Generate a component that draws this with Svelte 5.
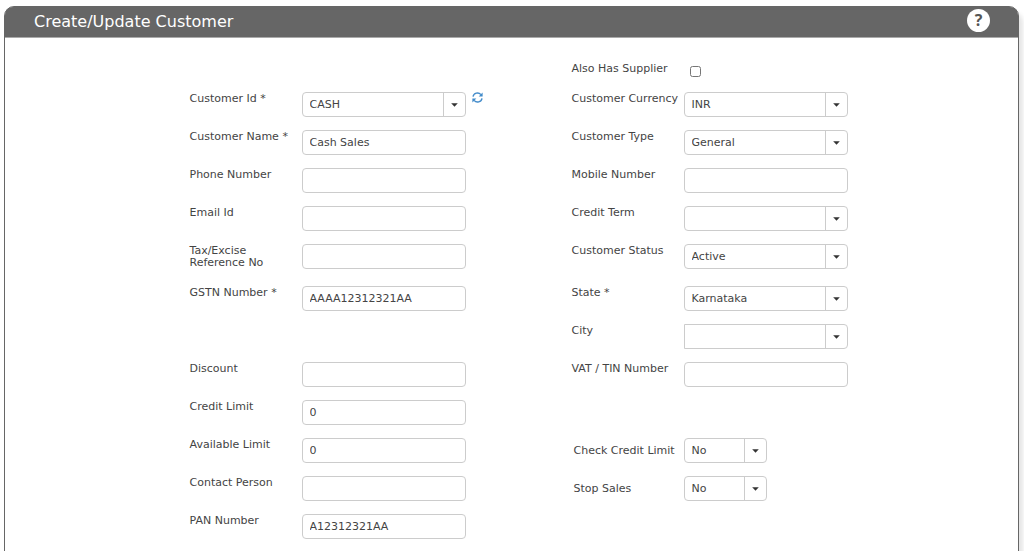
<script lang="ts">
  type Field = {
    id: string;
    label: string;
    kind: 'text' | 'select' | 'checkbox';
    value?: string;
    small?: boolean;
    refresh?: boolean;
    square?: boolean;
  };

  type Row = { left?: Field; right?: Field };

  const rows: Row[] = [
    { right: { id: 'has-supplier', label: 'Also Has Supplier', kind: 'checkbox' } },
    {
      left: { id: 'customer-id', label: 'Customer Id *', kind: 'select', value: 'CASH', refresh: true },
      right: { id: 'currency', label: 'Customer Currency', kind: 'select', value: 'INR' },
    },
    {
      left: { id: 'customer-name', label: 'Customer Name *', kind: 'text', value: 'Cash Sales' },
      right: { id: 'customer-type', label: 'Customer Type', kind: 'select', value: 'General' },
    },
    {
      left: { id: 'phone', label: 'Phone Number', kind: 'text' },
      right: { id: 'mobile', label: 'Mobile Number', kind: 'text' },
    },
    {
      left: { id: 'email', label: 'Email Id', kind: 'text' },
      right: { id: 'credit-term', label: 'Credit Term', kind: 'select' },
    },
    {
      left: { id: 'tax-ref', label: 'Tax/Excise Reference No', kind: 'text' },
      right: { id: 'status', label: 'Customer Status', kind: 'select', value: 'Active' },
    },
    {
      left: { id: 'gstn', label: 'GSTN Number *', kind: 'text', value: 'AAAA12312321AA' },
      right: { id: 'state', label: 'State *', kind: 'select', value: 'Karnataka' },
    },
    { right: { id: 'city', label: 'City', kind: 'select', square: true } },
    {
      left: { id: 'discount', label: 'Discount', kind: 'text' },
      right: { id: 'vat', label: 'VAT / TIN Number', kind: 'text' },
    },
    { left: { id: 'credit-limit', label: 'Credit Limit', kind: 'text', value: '0' } },
    {
      left: { id: 'available-limit', label: 'Available Limit', kind: 'text', value: '0' },
      right: { id: 'check-limit', label: 'Check Credit Limit', kind: 'select', value: 'No', small: true },
    },
    {
      left: { id: 'contact', label: 'Contact Person', kind: 'text' },
      right: { id: 'stop-sales', label: 'Stop Sales', kind: 'select', value: 'No', small: true },
    },
    { left: { id: 'pan', label: 'PAN Number', kind: 'text', value: 'A12312321AA' } },
  ];
</script>

{#snippet cell(field: Field | undefined)}
  {#if field}
    <div class="field" class:small={field.small} class:check={field.kind === 'checkbox'}>
      <label for={field.id}>{field.label}</label>
      <div class="control">
        {#if field.kind === 'checkbox'}
          <input id={field.id} type="checkbox" />
        {:else if field.kind === 'select'}
          <div class="combo" class:square={field.square}>
            <select id={field.id}>
              <option>{field.value ?? ''}</option>
            </select>
            <span class="arrow">
              <svg width="7" height="4" viewBox="0 0 7 4" aria-hidden="true">
                <path d="M0.2 0.2h6.6L3.5 3.8z" fill="#333" />
              </svg>
            </span>
          </div>
        {:else}
          <input id={field.id} type="text" value={field.value ?? ''} />
        {/if}
        {#if field.refresh}
          <button class="refresh" type="button" aria-label="Refresh">
            <svg width="11" height="11" viewBox="0 0 11 11" aria-hidden="true">
              <g fill="none" stroke="#428bca" stroke-width="1.4">
                <path d="M1 4.7A4.5 4.5 0 0 1 8.9 2.6" />
                <path d="M10 6.3A4.5 4.5 0 0 1 2.1 8.4" />
              </g>
              <path d="M10.6 0.6v3.9H6.7z" fill="#428bca" />
              <path d="M0.4 10.4V6.5h3.9z" fill="#428bca" />
            </svg>
          </button>
        {/if}
      </div>
    </div>
  {:else}
    <div class="field"></div>
  {/if}
{/snippet}

<main class="page">
  <section class="panel">
    <header>
      <h1>Create/Update Customer</h1>
      <button class="help" type="button" aria-label="Help">?</button>
    </header>
    <form>
      {#each rows as row}
        <div class="row">
          {@render cell(row.left)}
          {@render cell(row.right)}
        </div>
      {/each}
    </form>
  </section>
</main>

<style>
  :global(body) {
    background: #fff;
    overflow: hidden;
  }

  .page {
    box-sizing: border-box;
    min-height: 100vh;
    padding: 6px 5px 0 4px;
    font-family: Verdana, "DejaVu Sans", sans-serif;
    font-size: 11px;
    color: #444;
  }

  .panel {
    border: 1px solid #666;
    border-radius: 10px 10px 0 0;
    background: #fff;
    box-shadow: 4px 6px 4px #e6e6e6;
  }

  header {
    display: flex;
    align-items: center;
    justify-content: space-between;
    height: 30px;
    padding: 0 28px 0 29px;
    border-radius: 8px 8px 0 0;
    border-bottom: 1px solid #aaa;
    background: #666;
  }

  h1 {
    margin: 0;
    font-size: 16px;
    font-weight: 400;
    line-height: 24px;
    color: #fff;
  }

  .help {
    width: 23px;
    height: 23px;
    margin-bottom: 4px;
    padding: 0;
    border: 0;
    border-radius: 50%;
    background: #fff;
    color: #555;
    font: bold 16px/23px "Open Sans", sans-serif;
  }

  form {
    padding: 24px 0 0 14px;
  }

  .row {
    display: grid;
    grid-template-columns: 382px 276px;
    justify-content: center;
  }

  .field {
    display: grid;
    grid-template-columns: 112px 1fr;
    align-items: start;
    min-height: 38px;
  }

  .row:first-child .field {
    min-height: 30px;
  }

  label {
    padding: 1px 0 17px;
    line-height: 12px;
  }

  .small label {
    padding: 7px 0 0 2px;
  }

  .control {
    display: flex;
    align-items: flex-start;
    padding-bottom: 13px;
  }

  input[type='text'],
  select {
    box-sizing: border-box;
    width: 164px;
    height: 25px;
    margin: 0;
    padding: 0 7px;
    border: 1px solid #ccc;
    border-radius: 4px;
    background: #fff;
    color: #444;
    font: inherit;
  }

  select {
    appearance: none;
    grid-area: 1 / 1;
  }

  .combo {
    display: grid;
  }

  .small select {
    width: 83px;
  }

  .square select {
    border-radius: 0 4px 4px 0;
  }

  .arrow {
    grid-area: 1 / 1;
    justify-self: end;
    display: grid;
    place-items: center;
    width: 22px;
    border-left: 1px solid #ccc;
    margin: 1px 0;
    pointer-events: none;
  }

  .check .control {
    padding: 4px 0 0 6px;
  }

  input[type='checkbox'] {
    width: 11px;
    height: 11px;
    margin: 0;
  }

  .refresh {
    display: flex;
    margin-left: 6px;
    padding: 0;
    border: 0;
    background: none;
  }
</style>
